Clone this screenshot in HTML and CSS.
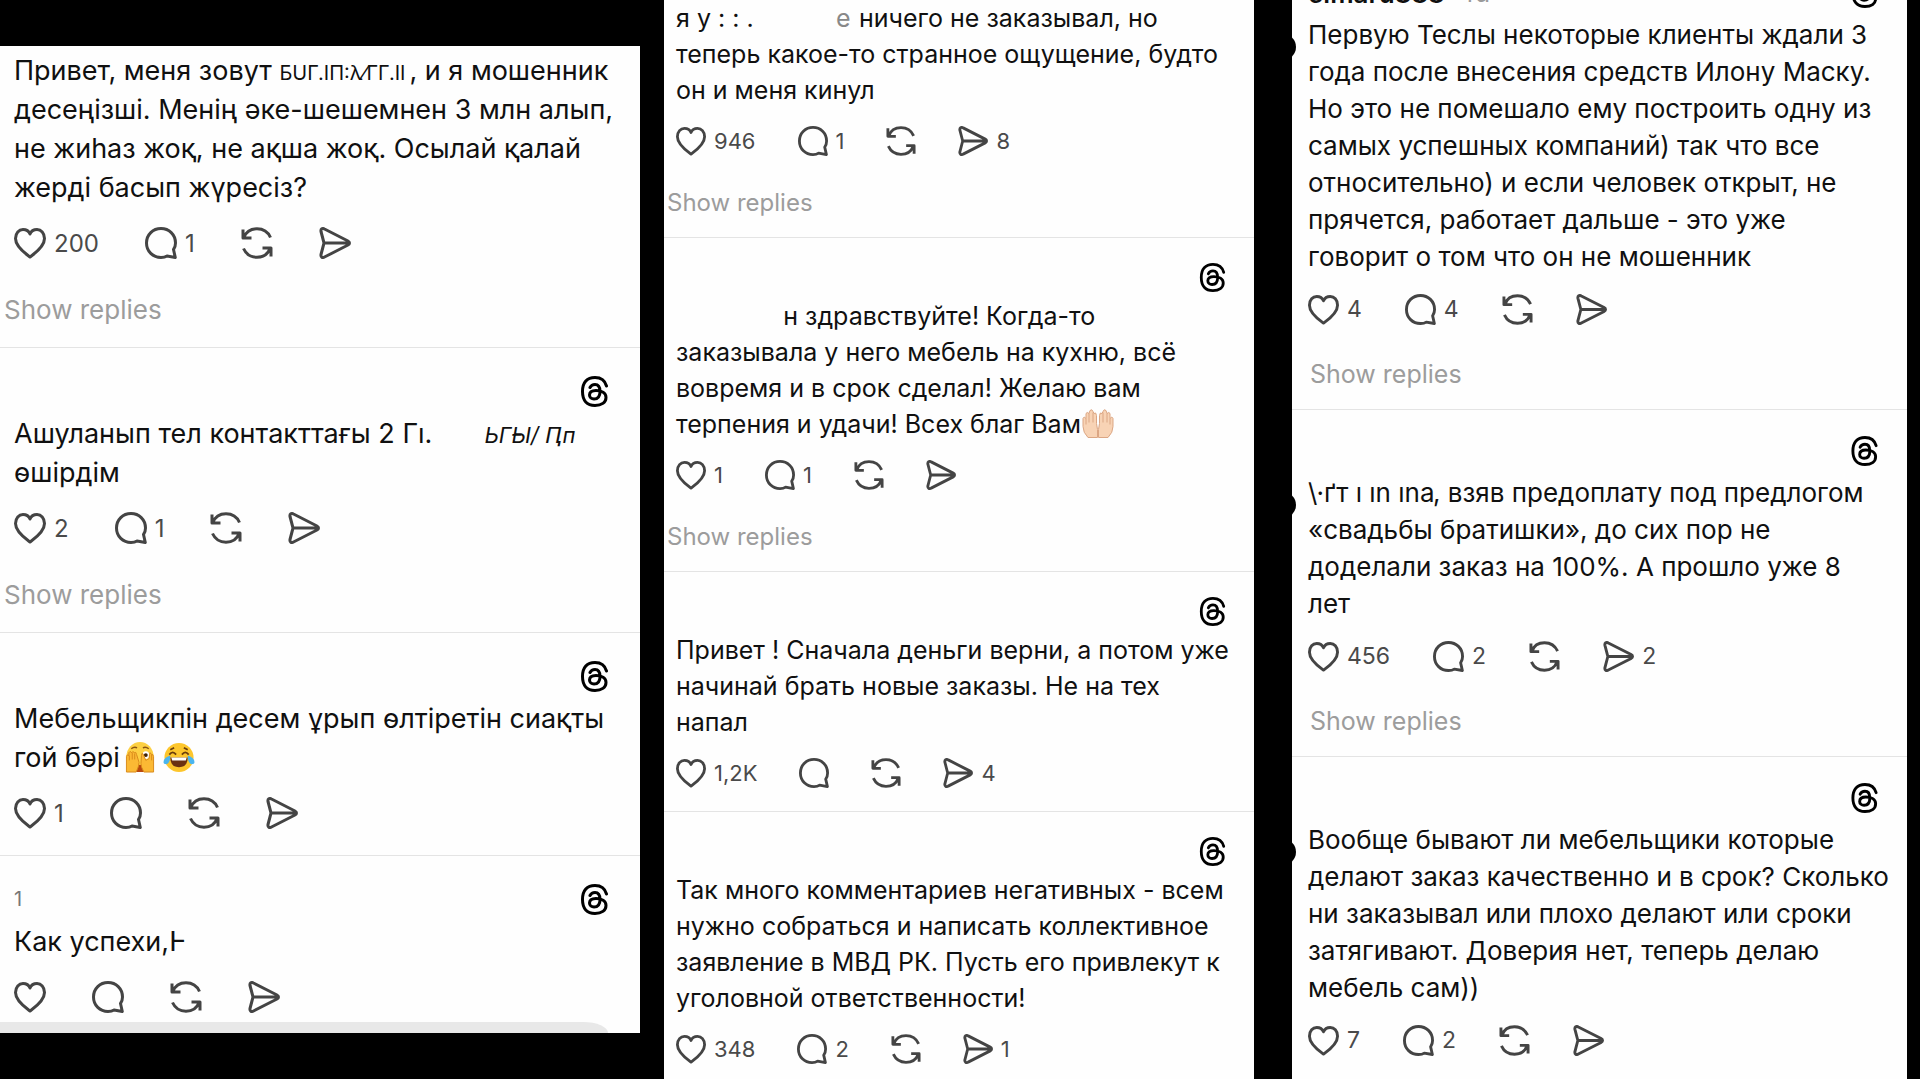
FILE: index.html
```
<!DOCTYPE html>
<html lang="ru">
<head>
    <meta charset="UTF-8">
    <meta name="viewport" content="width=device-width, initial-scale=1.0">
    <title>Threads</title>
    <link rel="stylesheet" href="styles.css">
</head>
<body>
    <!-- icon sprite -->
    <svg class="sprite" aria-hidden="true">
        <symbol id="heart" viewBox="0 0 32 32">
            <path d="M16 30C12 27 1.500 20 1.500 11.500C1.500 6 5 2.500 9 2.500C12.500 2.500 15 4.500 16 7C17 4.500 19.500 2.500 23 2.500C27 2.500 30.500 6 30.500 11.500C30.500 20 20 27 16 30Z"/>
        </symbol>
        <symbol id="comment" viewBox="0 0 32 32">
            <path d="M28.500 22.500C30 20.500 30.500 18 30.500 16C30.500 7.500 24 1.500 16 1.500S1.500 7.500 1.500 16S8 30.500 16 30.500C18.500 30.500 20.500 30 22 29L30.300 30.500Z"/>
        </symbol>
        <symbol id="repost" viewBox="0 0 32 32">
            <path d="M2 2.500V11H10.500M3 10.500C5 5 10 1.800 16 1.800C22 1.800 27 5 29.500 10.500M30 29.500V21H21.500M2.500 21.500C5 27 10 30.200 16 30.200C22 30.200 27 27 29 21.500"/>
        </symbol>
        <symbol id="send" viewBox="0 0 32 32">
            <path d="M5.500 16H30M2 4.500C1.500 2 3.500 .8 5.500 2L29 14C31 15 31 17 29 18L5.500 30C3.500 31.200 1.500 30 2 27.500L5 16Z"/>
        </symbol>
        <symbol id="threads" viewBox="0 0 27 31">
            <path d="M25.500 10C24 4.500 20 1.500 14 1.500C6 1.500 1.500 6.500 1.500 15.500S6 29.500 14 29.500C20.500 29.500 25 26.500 25 21.500C25 17 20.500 14.500 15 14.500C11 14.500 8.500 16 8.500 19C8.500 21.500 10.500 23 13 23C17 23 19 20.500 19 15.500C19 10.500 17.500 8.500 14 8.500C11.500 8.500 10 9.500 9 11.500"/>
        </symbol>
        <symbol id="peek" viewBox="0 0 32 32">
            <ellipse cx="16" cy="15" rx="14" ry="15" fill="#fdd043"/>
            <path d="M7 7Q10 4.500 13 6M19 6Q22 4.500 25 7" fill="none" stroke="#8a5413" stroke-width="1.500"/>
            <ellipse cx="22" cy="13.500" rx="3.500" ry="4" fill="#fff"/>
            <circle cx="22" cy="13.500" r="2" fill="#3d2209"/>
            <path d="M12 27Q16 20 20 27V31H12Z" fill="#b9480f"/>
            <g fill="#fbb934" stroke="#d98a1b" stroke-width="1">
                <path d="M2 31V15Q2.500 12 4.500 14V11Q5.500 8.500 7.500 11Q8.500 8.500 10 11Q12 9.500 12.500 13L15 21Q15 25 12 31Z"/>
                <path d="M30 31V15Q29.500 12 28 13L26.500 11Q25.500 12 25.500 17L22 19L19 12Q17.500 11 17.500 14L17 22Q17 26 20 31Z"/>
                <path d="M5 14V19M8 11V18M10.500 12V18M28 13V19" fill="none"/>
            </g>
        </symbol>
        <symbol id="joy" viewBox="0 0 32 32">
            <circle cx="16" cy="16" r="15" fill="#fdc62c"/>
            <path d="M6 13Q9.500 8.500 13 13M19 13Q22.500 8.500 26 13M7 8L11 6M25 8L21 6" fill="none" stroke="#6a3d0b" stroke-width="1.800"/>
            <path d="M7 16H25Q25 26 16 26T7 16Z" fill="#6b3212"/>
            <path d="M8 16H24L23 19H9Z" fill="#fff"/>
            <path d="M0 21Q0 16 7 14Q7 22 3 23Q0 23 0 21ZM32 21Q32 16 25 14Q25 22 29 23Q32 23 32 21Z" fill="#4bb5ef"/>
        </symbol>
        <symbol id="palms" viewBox="0 0 32 30">
            <g fill="#f8d3b5" stroke="#dba684" stroke-width="1">
                <path d="M15.500 29H6Q1 24 1 18V10Q2 7 4 10V5Q5 3 7 5L8 2Q10 0 11 3L12 5Q14 3 14.500 7V15L15.500 21Z"/>
                <path d="M16.500 29H26Q31 24 31 18V10Q30 7 28 10V5Q27 3 25 5L24 2Q22 0 21 3L20 5Q18 3 17.500 7V15L16.500 21Z"/>
                <path d="M4 10V16M7 5V14M11 4V14M28 10V16M25 5V14M21 4V14" fill="none"/>
            </g>
        </symbol>
    </svg>

    <main class="board">
        <section class="panel panel-left">
            <article class="post first">
                <p class="text">Привет, меня зовут <span class="erased name-a">БUГ.IП:λ⁄ГГ.II</span>, и я мошенник<br>десеңізші. Менің әке-шешемнен 3 млн алып,<br>не жиһаз жоқ, не ақша жоқ. Осылай қалай<br>жерді басып жүресіз?</p>
                <div class="actions">
                    <button aria-label="Like"><svg><use href="#heart"/></svg><span>200</span></button>
                    <button aria-label="Reply"><svg><use href="#comment"/></svg><span>1</span></button>
                    <button aria-label="Repost"><svg><use href="#repost"/></svg></button>
                    <button aria-label="Share"><svg><use href="#send"/></svg></button>
                </div>
                <a class="replies" href="#">Show replies</a>
            </article>

            <article class="post">
                <header class="post-head"><svg class="logo"><use href="#threads"/></svg></header>
                <p class="text">Ашуланып тел контакттағы 2 <span class="erased name-b">Гı.</span><span class="erased name-c">ЬҒЫ/ Ԥп</span><br>өшірдім</p>
                <div class="actions">
                    <button aria-label="Like"><svg><use href="#heart"/></svg><span>2</span></button>
                    <button aria-label="Reply"><svg><use href="#comment"/></svg><span>1</span></button>
                    <button aria-label="Repost"><svg><use href="#repost"/></svg></button>
                    <button aria-label="Share"><svg><use href="#send"/></svg></button>
                </div>
                <a class="replies" href="#">Show replies</a>
            </article>

            <article class="post">
                <header class="post-head"><svg class="logo"><use href="#threads"/></svg></header>
                <p class="text">Мебельщикпін десем ұрып өлтіретін сиақты<br>гой бәрі<svg class="emoji"><use href="#peek"/></svg><svg class="emoji"><use href="#joy"/></svg></p>
                <div class="actions">
                    <button aria-label="Like"><svg><use href="#heart"/></svg><span>1</span></button>
                    <button aria-label="Reply"><svg><use href="#comment"/></svg></button>
                    <button aria-label="Repost"><svg><use href="#repost"/></svg></button>
                    <button aria-label="Share"><svg><use href="#send"/></svg></button>
                </div>
            </article>

            <article class="post last">
                <header class="post-head"><span class="rest">1</span><svg class="logo"><use href="#threads"/></svg></header>
                <p class="text">Как успехи,Ͱ</p>
                <div class="actions">
                    <button aria-label="Like"><svg><use href="#heart"/></svg></button>
                    <button aria-label="Reply"><svg><use href="#comment"/></svg></button>
                    <button aria-label="Repost"><svg><use href="#repost"/></svg></button>
                    <button aria-label="Share"><svg><use href="#send"/></svg></button>
                </div>
            </article>
            <div class="reply-bar"></div>
        </section>

        <section class="panel panel-mid">
            <article class="post first">
                <p class="text">я у <span class="erased name-d">: : .</span><span class="erased name-e">е</span> ничего не заказывал, но<br>теперь какое-то странное ощущение, будто<br>он и меня кинул</p>
                <div class="actions">
                    <button aria-label="Like"><svg><use href="#heart"/></svg><span>946</span></button>
                    <button aria-label="Reply"><svg><use href="#comment"/></svg><span>1</span></button>
                    <button aria-label="Repost"><svg><use href="#repost"/></svg></button>
                    <button aria-label="Share"><svg><use href="#send"/></svg><span>8</span></button>
                </div>
                <a class="replies" href="#">Show replies</a>
            </article>

            <article class="post">
                <header class="post-head"><svg class="logo"><use href="#threads"/></svg></header>
                <p class="text"><span class="erased name-f">н</span> здравствуйте! Когда-то<br>заказывала у него мебель на кухню, всё<br>вовремя и в срок сделал! Желаю вам<br>терпения и удачи! Всех благ Вам<svg class="emoji"><use href="#palms"/></svg></p>
                <div class="actions">
                    <button aria-label="Like"><svg><use href="#heart"/></svg><span>1</span></button>
                    <button aria-label="Reply"><svg><use href="#comment"/></svg><span>1</span></button>
                    <button aria-label="Repost"><svg><use href="#repost"/></svg></button>
                    <button aria-label="Share"><svg><use href="#send"/></svg></button>
                </div>
                <a class="replies" href="#">Show replies</a>
            </article>

            <article class="post">
                <header class="post-head"><svg class="logo"><use href="#threads"/></svg></header>
                <p class="text">Привет ! Сначала деньги верни, а потом уже<br>начинай брать новые заказы. Не на тех<br>напал</p>
                <div class="actions">
                    <button aria-label="Like"><svg><use href="#heart"/></svg><span>1,2K</span></button>
                    <button aria-label="Reply"><svg><use href="#comment"/></svg></button>
                    <button aria-label="Repost"><svg><use href="#repost"/></svg></button>
                    <button aria-label="Share"><svg><use href="#send"/></svg><span>4</span></button>
                </div>
            </article>

            <article class="post last">
                <header class="post-head"><svg class="logo"><use href="#threads"/></svg></header>
                <p class="text">Так много комментариев негативных - всем<br>нужно собраться и написать коллективное<br>заявление в МВД РК. Пусть его привлекут к<br>уголовной ответственности!</p>
                <div class="actions">
                    <button aria-label="Like"><svg><use href="#heart"/></svg><span>348</span></button>
                    <button aria-label="Reply"><svg><use href="#comment"/></svg><span>2</span></button>
                    <button aria-label="Repost"><svg><use href="#repost"/></svg></button>
                    <button aria-label="Share"><svg><use href="#send"/></svg><span>1</span></button>
                </div>
            </article>
        </section>

        <section class="panel panel-right">
            <article class="post first dot">
                <header class="post-head"><span class="author">elmaru888</span><span class="time">4d</span><svg class="logo"><use href="#threads"/></svg></header>
                <p class="text">Первую Теслы некоторые клиенты ждали 3<br>года после внесения средств Илону Маску.<br>Но это не помешало ему построить одну из<br>самых успешных компаний) так что все<br>относительно) и если человек открыт, не<br>прячется, работает дальше - это уже<br>говорит о том что он не мошенник</p>
                <div class="actions">
                    <button aria-label="Like"><svg><use href="#heart"/></svg><span>4</span></button>
                    <button aria-label="Reply"><svg><use href="#comment"/></svg><span>4</span></button>
                    <button aria-label="Repost"><svg><use href="#repost"/></svg></button>
                    <button aria-label="Share"><svg><use href="#send"/></svg></button>
                </div>
                <a class="replies" href="#">Show replies</a>
            </article>

            <article class="post dot">
                <header class="post-head"><svg class="logo"><use href="#threads"/></svg></header>
                <p class="text"><span class="erased name-g">\·ґт ı ın ınа</span>, взяв предоплату под предлогом<br>«свадьбы братишки», до сих пор не<br>доделали заказ на 100%. А прошло уже 8<br>лет</p>
                <div class="actions">
                    <button aria-label="Like"><svg><use href="#heart"/></svg><span>456</span></button>
                    <button aria-label="Reply"><svg><use href="#comment"/></svg><span>2</span></button>
                    <button aria-label="Repost"><svg><use href="#repost"/></svg></button>
                    <button aria-label="Share"><svg><use href="#send"/></svg><span>2</span></button>
                </div>
                <a class="replies" href="#">Show replies</a>
            </article>

            <article class="post last dot">
                <header class="post-head"><svg class="logo"><use href="#threads"/></svg></header>
                <p class="text">Вообще бывают ли мебельщики которые<br>делают заказ качественно и в срок? Сколько<br>ни заказывал или плохо делают или сроки<br>затягивают. Доверия нет, теперь делаю<br>мебель сам))</p>
                <div class="actions">
                    <button aria-label="Like"><svg><use href="#heart"/></svg><span>7</span></button>
                    <button aria-label="Reply"><svg><use href="#comment"/></svg><span>2</span></button>
                    <button aria-label="Repost"><svg><use href="#repost"/></svg></button>
                    <button aria-label="Share"><svg><use href="#send"/></svg></button>
                </div>
            </article>
        </section>
    </main>
</body>
</html>
```

FILE: styles.css
```
body {
    margin: 0;
    background-color: #000;
    color: #101010;
    font-family: Inter, "DejaVu Sans", sans-serif;
}

.sprite {
    display: none;
}

.board {
    display: flex;
    align-items: flex-start;
    height: 100vh;
    overflow: hidden;
}

.panel {
    background-color: #fefefe;
    overflow: hidden;
    min-width: 0;
}

.panel-left {
    flex: 640;
    margin-top: 46px;
    --size: 27px;
    --line: 39px;
    --count: 24px;
    --icon: 32px;
    --gap: 46px;
    --pad: 14px;
    --link-size: 26px;
    --link-pad: 4px;
    --head: 66px;
    --head-top: 20px;
    --logo: 31px;
    --logo-right: 32px;
    --row: 72px;
    --link: 62px;
    --bottom: 6px;
}

.panel-mid {
    flex: 590;
    margin-left: 24px;
    min-height: 100vh;
    --size: 25px;
    --line: 36px;
    --count: 22px;
    --icon: 30px;
    --gap: 42px;
    --pad: 12px;
    --link-size: 24px;
    --link-pad: 3px;
    --head: 60px;
    --head-top: 18px;
    --logo: 29px;
    --logo-right: 28px;
    --row: 66px;
    --link: 58px;
    --bottom: 5px;
}

.panel-right {
    flex: 615;
    margin: 0 13px 0 38px;
    min-height: 100vh;
    --size: 26px;
    --line: 37px;
    --count: 23px;
    --icon: 31px;
    --gap: 43px;
    --pad: 16px;
    --link-size: 25px;
    --link-pad: 18px;
    --head: 64px;
    --head-top: 18px;
    --logo: 30px;
    --logo-right: 29px;
    --row: 68px;
    --link: 62px;
    --bottom: 4px;
}

.post {
    position: relative;
    border-bottom: 1px solid #e4e4e4;
    padding-bottom: var(--bottom);
}

.post.last {
    border-bottom: none;
    padding-bottom: 0;
}

.panel-left .first {
    padding-top: 5px;
}

.panel-right .first {
    margin-top: -48px;
}

.post-head {
    display: flex;
    align-items: center;
    box-sizing: border-box;
    height: var(--head);
    padding: var(--head-top) var(--logo-right) 0 var(--pad);
}

.logo {
    width: 27px;
    height: var(--logo);
    margin-left: auto;
    fill: none;
    stroke: #000;
    stroke-width: 3;
    stroke-linecap: round;
}

.author {
    font-size: var(--size);
    font-weight: 600;
}

.time {
    margin-left: 14px;
    font-size: var(--link-size);
    color: #9a9a9a;
}

.rest {
    font-size: 20px;
    color: #777;
}

.text {
    margin: 0;
    padding-left: var(--pad);
    font-size: var(--size);
    line-height: var(--line);
    white-space: nowrap;
}

/* half rubbed out names */
.erased {
    display: inline-block;
    line-height: 1;
}

.name-a {
    width: 130px;
    font-size: 20px;
}

.name-b {
    width: 82px;
}

.name-c {
    width: 90px;
    font-size: 22px;
    font-style: italic;
}

.name-d {
    width: 118px;
}

.name-e {
    width: 16px;
    color: #888;
}

.name-f {
    width: 122px;
    text-align: right;
}

.name-g {
    width: 125px;
}

.emoji {
    width: 32px;
    height: 31px;
    margin: 0 3px 0 4px;
    vertical-align: -6px;
}

.panel-mid .emoji {
    margin: 0 1px;
}

.actions {
    display: flex;
    align-items: center;
    gap: var(--gap);
    height: var(--row);
    padding-left: var(--pad);
}

.actions button {
    display: flex;
    align-items: center;
    gap: 8px;
    padding: 0;
    border: none;
    background: none;
    color: #4a4a4a;
    font-family: inherit;
    font-size: var(--count);
    cursor: pointer;
}

.actions svg {
    width: var(--icon);
    height: var(--icon);
    fill: none;
    stroke: #444;
    stroke-width: 3;
    stroke-linejoin: round;
}

.replies {
    display: block;
    padding-left: var(--link-pad);
    color: #9c9c9c;
    font-size: var(--link-size);
    line-height: var(--link);
    text-decoration: none;
}

.reply-bar {
    height: 11px;
    margin: -11px 32px 0 0;
    background-color: #e8e8e8;
    border-top-right-radius: 36px 16px;
}

/* edge of the avatar that sits outside the panel */
.dot::before {
    content: "";
    position: absolute;
    top: 82px;
    left: -22px;
    width: 26px;
    height: 26px;
    border-radius: 50%;
    background-color: #000;
}
```
